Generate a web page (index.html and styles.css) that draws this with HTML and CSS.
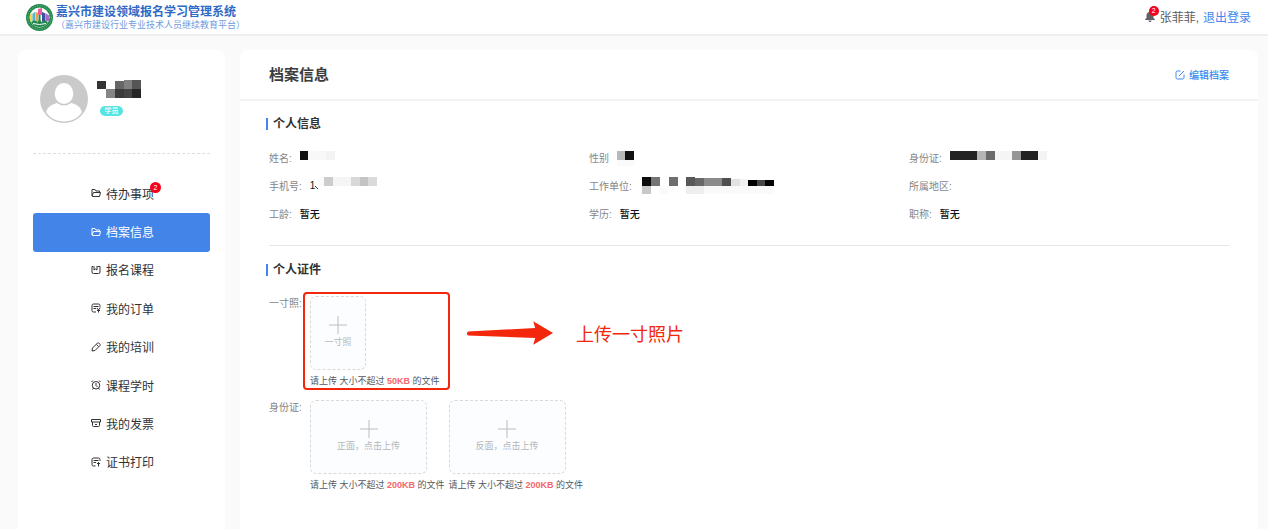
FILE: index.html
```html
<!DOCTYPE html>
<html lang="zh-CN">
<head>
<meta charset="utf-8">
<meta name="viewport" content="width=device-width, initial-scale=1">
<title>档案信息</title>
<link rel="stylesheet" href="styles.css">
</head>
<body>
<header class="topbar">
  <div class="brand">
    <svg class="brand-logo" viewBox="0 0 54 54" aria-hidden="true">
      <circle cx="27" cy="27" r="27" fill="#22894c"/>
      <circle cx="27" cy="27" r="23.5" fill="none" stroke="#8cc7a2" stroke-width="2" stroke-dasharray="2 3"/>
      <circle cx="27" cy="27" r="20" fill="#fff"/>
      <path d="M8 21l5-3v16H8z" fill="#f3d54b"/>
      <path d="M13 20l6-5v20h-6z" fill="#49b7e6"/>
      <path d="M20 17h4v18h-4z" fill="#f2a33c"/>
      <path d="M24 10l8-2v14h-8z" fill="#ee5d9a"/>
      <path d="M32 16l7 3v16h-7z" fill="#3d4fa3"/>
      <path d="M40 19l6 4v11h-6z" fill="#a56cc0"/>
      <path d="M25 22h4v14h-4z" fill="#22894c"/>
      <path d="M10 36q8-6 13 0l4-6 4 6q6-6 13 0-5 10-17 10T10 36z" fill="#22894c"/>
      <path d="M14 39q13 4 26 0" fill="none" stroke="#fff" stroke-width="2"/>
    </svg>
    <div class="brand-text">
      <div class="brand-name">嘉兴市建设领域报名学习管理系统</div>
      <div class="brand-sub">（嘉兴市建设行业专业技术人员继续教育平台）</div>
    </div>
  </div>
  <div class="account">
    <button class="bell" type="button" aria-label="消息">
      <svg viewBox="0 0 24 24" aria-hidden="true"><path d="M12 2a2 2 0 0 1 2 2c3 1 5 3.600 5 7v5l3 3v1H2v-1l3-3v-5c0-3.400 2-6 5-7a2 2 0 0 1 2-2zM9 21h6a3 3 0 0 1-6 0z" fill="#5f6266"/></svg>
      <span class="count">2</span>
    </button>
    <span>张菲菲,</span>
    <a class="link" href="#logout">退出登录</a>
  </div>
</header>

<div class="page">
  <aside class="card sidebar">
    <div class="profile">
      <svg class="avatar" viewBox="0 0 48 48" role="img" aria-label="头像">
        <circle cx="24" cy="24" r="24" fill="#cacaca"/>
        <ellipse cx="24" cy="18.500" rx="9.300" ry="10.500" fill="#fff"/>
        <path d="M6 37C8 31 13 29 17 28q7 5 14 0c5 1 9 3 11 9-4 6-10 9.500-18 9.500S10 43 6 37z" fill="#fff"/>
      </svg>
      <div class="profile-text">
        <svg class="mask" width="45" height="20" viewBox="0 0 45 20" aria-hidden="true">
          <path d="M0 1h9v8H0z" fill="#333"/><path d="M18 1h9v8h-9z" fill="#666"/><path d="M27 0h8v9h-8z" fill="#808080"/><path d="M35 0h9v9h-9z" fill="#555"/>
          <path d="M9 9h9v9H9z" fill="#858585"/><path d="M18 9h9v9h-9z" fill="#3b3b3b"/><path d="M27 9h8v9h-8z" fill="#444"/><path d="M35 9h9v9h-9z" fill="#262626"/>
        </svg>
        <span class="role">学员</span>
      </div>
    </div>
    <nav class="menu">
      <a class="menu-item" href="#todo">
        <svg class="icon" viewBox="0 0 20 20"><path d="M2 16V3h6l2 3h7v3M2 16l3-7h14l-2 8H3z"/></svg>
        <span class="menu-label">待办事项<span class="count count-menu">2</span></span>
      </a>
      <a class="menu-item active" href="#archive" aria-current="page">
        <svg class="icon" viewBox="0 0 20 20"><path d="M2 16V3h6l2 3h7v3M2 16l3-7h14l-2 8H3z"/></svg>
        <span class="menu-label">档案信息</span>
      </a>
      <a class="menu-item" href="#courses">
        <svg class="icon" viewBox="0 0 20 20"><path d="M4 3H2v11q0 3 3 3h10q3 0 3-3V3h-5M6 2v8l3-2 3 2V2"/></svg>
        <span class="menu-label">报名课程</span>
      </a>
      <a class="menu-item" href="#orders">
        <svg class="icon" viewBox="0 0 20 20"><path d="M18 9V5q0-3-3-3H5Q2 2 2 5v10q0 3 3 3h5M5 7h10M5 11h5M12 10l3 4 3-4M15 14v5M12 15h6"/></svg>
        <span class="menu-label">我的订单</span>
      </a>
      <a class="menu-item" href="#training">
        <svg class="icon" viewBox="0 0 20 20"><path d="M2 18l1-6L13 2q2-1 4 1t1 4L8 17zM11 5l4 4"/></svg>
        <span class="menu-label">我的培训</span>
      </a>
      <a class="menu-item" href="#hours">
        <svg class="icon" viewBox="0 0 20 20"><circle cx="10" cy="10.500" r="7.500"/><path d="M10 6v5l3 3M1 4l3-3M19 4l-3-3M5 16l-2 3M15 16l2 3"/></svg>
        <span class="menu-label">课程学时</span>
      </a>
      <a class="menu-item" href="#invoices">
        <svg class="icon" viewBox="0 0 20 20"><path d="M1 3h18v5H1zM3 8v7q0 2 2 2h10q2 0 2-2V8M8 13h4"/></svg>
        <span class="menu-label">我的发票</span>
      </a>
      <a class="menu-item" href="#certificates">
        <svg class="icon" viewBox="0 0 20 20"><path d="M18 8V5q0-3-3-3H5Q2 2 2 5v10q0 3 3 3h4M5 7h10M5 11h5M12 14l3-3 3 3M15 11v8"/></svg>
        <span class="menu-label">证书打印</span>
      </a>
    </nav>
  </aside>

  <main class="card content">
    <div class="content-head">
      <h1>档案信息</h1>
      <a class="link edit" href="#edit">
        <svg class="icon" viewBox="0 0 20 20"><path d="M11 2H5Q2 2 2 5v10q0 3 3 3h10q3 0 3-3V9M8 12L18 2"/></svg>
        编辑档案
      </a>
    </div>
    <div class="content-body">
      <h2>个人信息</h2>
      <dl class="fields">
        <div class="field"><dt>姓名:</dt><dd>
          <svg class="mask" width="36" height="18" viewBox="0 0 36 18" aria-hidden="true"><path d="M0 3h8v9H0z" fill="#111"/><path d="M8 3h18v9H8z" fill="#f8f8f8"/><path d="M26 3h9v9h-9z" fill="#f3f3f3"/></svg></dd></div>
        <div class="field"><dt>性别</dt><dd>
          <svg class="mask" width="18" height="18" viewBox="0 0 18 18" aria-hidden="true"><path d="M0 3h8v9H0z" fill="#b8b8b8"/><path d="M8 3h9v9H8z" fill="#111"/><path d="M0 12h17v6H0z" fill="#fafafa"/></svg></dd></div>
        <div class="field"><dt>身份证:</dt><dd>
          <svg class="mask" width="106" height="18" viewBox="0 0 106 18" aria-hidden="true"><path d="M0 3h27v9H0z" fill="#222"/><path d="M27 3h9v9h-9z" fill="#b5b5b5"/><path d="M36 3h9v9h-9z" fill="#6a6a6a"/><path d="M45 3h17v9H45z" fill="#f5f5f5"/><path d="M62 3h9v9h-9z" fill="#959595"/><path d="M71 3h17v9H71z" fill="#222"/><path d="M88 3h9v9h-9z" fill="#f4f4f4"/></svg></dd></div>
        <div class="field"><dt>手机号:</dt><dd>1<svg class="mask" width="72" height="18" viewBox="0 0 72 18" aria-hidden="true"><path d="M0 10l3 3" stroke="#333"/><path d="M3 1h6v9H3z" fill="#fafafa"/><path d="M9 1h9v9H9z" fill="#ccc"/><path d="M18 1h18v9H18z" fill="#f5f5f5"/><path d="M36 1h9v9h-9z" fill="#d8d8d8"/><path d="M45 1h8v9h-8z" fill="#c4c4c4"/><path d="M53 1h9v9h-9z" fill="#dadada"/></svg></dd></div>
        <div class="field"><dt>工作单位:</dt><dd>
          <svg class="mask" width="136" height="18" viewBox="-2 0 136 18" aria-hidden="true"><path d="M0 1h9v9H0z" fill="#0c0c0c"/><path d="M9 1h9v9H9z" fill="#757575"/><path d="M27 1h9v9h-9z" fill="#6e6e6e"/><path d="M44 1h9v9h-9z" fill="#585858"/><path d="M53 2h9v8h-9z" fill="#686868"/><path d="M62 2h18v8H62z" fill="#8b8b8b"/><path d="M80 2h9v8h-9z" fill="#505050"/><path d="M89 3h9v7h-9z" fill="#e2e2e2"/><path d="M98 3h8v7h-8z" fill="#f2f2f2"/><path d="M106 4h9v6h-9z" fill="#000"/><path d="M115 4h8v6h-8z" fill="#484848"/><path d="M123 4h9v6h-9z" fill="#050505"/><path d="M0 10h9v8H0z" fill="#c8c8c8"/><path d="M18 10h9v8h-9zM62 10h70v8H62z" fill="#fafafa"/><path d="M44 10h18v8H44z" fill="#eee"/></svg></dd></div>
        <div class="field"><dt>所属地区:</dt><dd></dd></div>
        <div class="field"><dt>工龄:</dt><dd>暂无</dd></div>
        <div class="field"><dt>学历:</dt><dd>暂无</dd></div>
        <div class="field"><dt>职称:</dt><dd>暂无</dd></div>
      </dl>
      <hr class="divider">
      <h2>个人证件</h2>
      <div class="uploads">
        <div class="upload-row">
          <span class="upload-title">一寸照:</span>
          <div class="upload photo">
            <button class="drop" type="button">
              <svg class="plus" viewBox="0 0 18 18" aria-hidden="true"><path d="M9 0v18M0 9h18"/></svg>
              一寸照
            </button>
            <p class="hint">请上传 大小不超过 <b>50KB</b> 的文件</p>
            <div class="callout-box"></div>
            <div class="callout">
              <svg class="arrow" viewBox="0 0 88 24" aria-hidden="true"><path d="M2 10.500L70 7 68 0 88 12 68 24l2-7L2 14.500Q0 12.500 2 10.500z" fill="#f3270b"/></svg>
              <span>上传一寸照片</span>
            </div>
          </div>
        </div>
        <div class="upload-row">
          <span class="upload-title">身份证:</span>
          <div class="upload">
            <button class="drop wide" type="button">
              <svg class="plus" viewBox="0 0 18 18" aria-hidden="true"><path d="M9 0v18M0 9h18"/></svg>
              正面，点击上传
            </button>
            <p class="hint">请上传 大小不超过 <b>200KB</b> 的文件</p>
          </div>
          <div class="upload">
            <button class="drop wide" type="button">
              <svg class="plus" viewBox="0 0 18 18" aria-hidden="true"><path d="M9 0v18M0 9h18"/></svg>
              反面，点击上传
            </button>
            <p class="hint">请上传 大小不超过 <b>200KB</b> 的文件</p>
          </div>
        </div>
      </div>
    </div>
  </main>
</div>
</body>
</html>
```

FILE: styles.css
```css
* { box-sizing: border-box; }

body {
  margin: 0;
  min-height: 100vh;
  display: flex;
  flex-direction: column;
  background: #fafafa;
  color: #303133;
  font-family: "Liberation Sans", "Noto Sans CJK SC", sans-serif;
  font-size: 12px;
}

h1, h2, p, dl, dd { margin: 0; }
a { color: inherit; text-decoration: none; }
button { font-family: inherit; padding: 0; cursor: pointer; }

.link { color: #4187f0; }

.icon {
  width: 10px;
  height: 10px;
  flex: none;
  fill: none;
  stroke: currentColor;
  stroke-width: 2;
}

.mask { display: block; shape-rendering: crispEdges; }

/* Top bar */
.topbar {
  display: flex;
  justify-content: space-between;
  align-items: center;
  height: 36px;
  padding: 0 17px 0 26px;
  background: #fff;
  border-bottom: 2px solid #eee;
}

.brand { display: flex; align-items: center; gap: 3px; }
.brand-logo { width: 27px; height: 27px; }
.brand-name { color: #2f69c6; font-weight: 700; line-height: 15px; }
.brand-sub {
  color: #6d9bdf;
  font-family: "Liberation Sans", "Noto Sans CJK SC", sans-serif;
  font-size: 9px;
  line-height: 10px;
}

.account {
  display: flex;
  align-items: center;
  gap: 4px;
  padding-bottom: 2px;
  color: #5a5a5a;
}

.bell {
  position: relative;
  width: 12px;
  height: 12px;
  border: 0;
  background: none;
}
.bell svg { display: block; width: 12px; height: 12px; }

.count {
  position: absolute;
  top: -4px;
  right: -3px;
  width: 10px;
  height: 10px;
  border-radius: 50%;
  background: #f5001d;
  color: #fff;
  font-size: 7px;
  line-height: 10px;
  text-align: center;
}

/* Page */
.page {
  flex: 1;
  display: flex;
  gap: 15px;
  padding: 14px 10px 0 18px;
}

.card { background: #fff; border-radius: 8px 8px 0 0; }

/* Sidebar */
.sidebar { flex: none; width: 207px; padding: 25px 15px 0; }

.profile {
  display: flex;
  gap: 9px;
  padding: 0 7px 30px;
  border-bottom: 1px dashed #ddd;
}
.avatar { width: 48px; height: 48px; }
.profile-text { padding-top: 5px; }

.role {
  display: block;
  width: 23px;
  margin: 6px 0 0 3px;
  border-radius: 5px;
  background: #55e3e3;
  color: #fff;
  font-size: 7px;
  font-weight: 500;
  line-height: 10px;
  text-align: center;
}

.menu {
  display: grid;
  grid-auto-rows: 1fr;
  min-height: 307px;
  margin-top: 21px;
}

.menu-item {
  display: flex;
  align-items: center;
  justify-content: center;
  gap: 5px;
  padding: 0 0 2px 2px;
  border-radius: 3px;
}
.menu-item.active { background: #4384e8; color: #fff; }
.menu-label { position: relative; }
.count-menu { top: -3px; right: -7px; width: 11px; height: 11px; line-height: 11px; }

/* Content */
.content { flex: 1; min-width: 0; }

.content-head {
  display: flex;
  align-items: center;
  justify-content: space-between;
  height: 51px;
  padding: 0 29px;
  border-bottom: 2px solid #f3f3f4;
}
h1 { font-size: 15px; font-weight: 700; line-height: 20px; color: #3c3d40; }
.edit { display: flex; align-items: center; gap: 4px; font-size: 10px; font-weight: 500; }

.content-body { padding: 14px 29px 24px; }

h2 {
  position: relative;
  padding-left: 4px;
  font-size: 12px;
  font-weight: 700;
  line-height: 18px;
}
h2::before {
  content: "";
  position: absolute;
  left: -3px;
  top: 3px;
  width: 2px;
  height: 12px;
  background: #4384f0;
}

.fields {
  display: grid;
  grid-template-columns: repeat(3, 1fr);
  grid-auto-rows: 28px;
  margin-top: 10px;
  font-size: 10px;
}
.field { display: flex; align-items: center; gap: 8px; }
.field dt { color: #858585; }
.field dd { display: flex; align-items: center; color: #111; font-weight: 500; }

.divider {
  height: 1px;
  margin: 18px 0 15px;
  border: 0;
  background: #e6e6e6;
}

/* Uploads */
.uploads { display: grid; gap: 11px; margin-top: 17px; }
.upload-row { display: flex; gap: 4px; }
.upload-title {
  width: 37px;
  color: #858585;
  font-size: 10px;
  line-height: 16px;
  white-space: nowrap;
}
.upload { position: relative; }

.drop {
  display: flex;
  flex-direction: column;
  align-items: center;
  justify-content: center;
  gap: 2px;
  width: 56px;
  height: 74px;
  padding-bottom: 3px;
  border: 1px dashed #d9d9d9;
  border-radius: 6px;
  background: #fbfdff;
  color: #b5b7bb;
  font-size: 9px;
  line-height: 12px;
}
.drop.wide { width: 117px; }
.plus { width: 18px; height: 18px; fill: none; stroke: #babcc0; stroke-width: 1; }

.hint {
  margin-top: 3px;
  color: #55585d;
  font-size: 9px;
  line-height: 16px;
  white-space: nowrap;
}
.hint b { color: #f3666a; }

/* Guide marks laid over the upload area */
.callout-box {
  position: absolute;
  inset: -4px -10px -1px -7px;
  border: 2px solid #f3270b;
  border-radius: 4px;
  pointer-events: none;
}
.callout {
  position: absolute;
  top: 24px;
  left: 156px;
  display: flex;
  align-items: center;
  gap: 23px;
  color: #f3270b;
  font-size: 18px;
  white-space: nowrap;
}
.arrow { width: 87px; height: 24px; flex: none; }
```
